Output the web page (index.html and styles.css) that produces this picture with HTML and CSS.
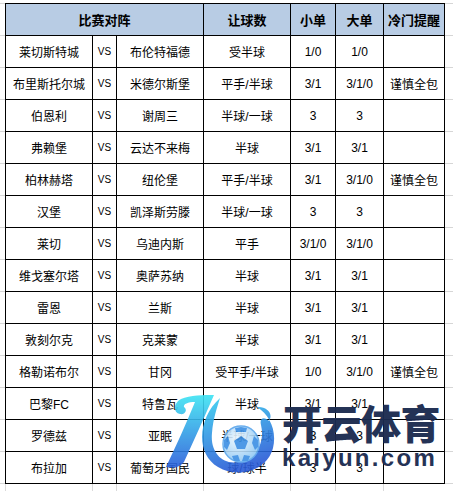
FILE: index.html
```html
<!DOCTYPE html>
<html lang="zh">
<head>
<meta charset="utf-8">
<title>比赛对阵</title>
<link rel="stylesheet" href="styles.css">
</head>
<body>
<div class="page">
  <table class="grid">
    <colgroup>
      <col class="c-home"><col class="c-vs"><col class="c-away"><col class="c-hcp"><col class="c-small"><col class="c-big"><col class="c-tip">
    </colgroup>
    <thead>
      <tr><th colspan="3">比赛对阵</th><th>让球数</th><th>小单</th><th>大单</th><th>冷门提醒</th></tr>
    </thead>
    <tbody>
      <tr><td>莱切斯特城</td><td class="vs">VS</td><td>布伦特福德</td><td>受半球</td><td>1/0</td><td>1/0</td><td></td></tr>
      <tr><td>布里斯托尔城</td><td class="vs">VS</td><td>米德尔斯堡</td><td>平手/半球</td><td>3/1</td><td>3/1/0</td><td>谨慎全包</td></tr>
      <tr><td>伯恩利</td><td class="vs">VS</td><td>谢周三</td><td>半球/一球</td><td>3</td><td>3</td><td></td></tr>
      <tr><td>弗赖堡</td><td class="vs">VS</td><td>云达不来梅</td><td>半球</td><td>3/1</td><td>3/1</td><td></td></tr>
      <tr><td>柏林赫塔</td><td class="vs">VS</td><td>纽伦堡</td><td>平手/半球</td><td>3/1</td><td>3/1/0</td><td>谨慎全包</td></tr>
      <tr><td>汉堡</td><td class="vs">VS</td><td>凯泽斯劳滕</td><td>半球/一球</td><td>3</td><td>3</td><td></td></tr>
      <tr><td>莱切</td><td class="vs">VS</td><td>乌迪内斯</td><td>平手</td><td>3/1/0</td><td>3/1/0</td><td></td></tr>
      <tr><td>维戈塞尔塔</td><td class="vs">VS</td><td>奥萨苏纳</td><td>半球</td><td>3/1</td><td>3/1</td><td></td></tr>
      <tr><td>雷恩</td><td class="vs">VS</td><td>兰斯</td><td>半球</td><td>3/1</td><td>3/1</td><td></td></tr>
      <tr><td>敦刻尔克</td><td class="vs">VS</td><td>克莱蒙</td><td>半球</td><td>3/1</td><td>3/1</td><td></td></tr>
      <tr><td>格勒诺布尔</td><td class="vs">VS</td><td>甘冈</td><td>受平手/半球</td><td>1/0</td><td>3/1/0</td><td>谨慎全包</td></tr>
      <tr><td>巴黎FC</td><td class="vs">VS</td><td>特鲁瓦</td><td>半球</td><td>3/1</td><td>3/1</td><td></td></tr>
      <tr><td>罗德兹</td><td class="vs">VS</td><td>亚眠</td><td>半球/一球</td><td>3</td><td>3</td><td></td></tr>
      <tr><td>布拉加</td><td class="vs">VS</td><td>葡萄牙国民</td><td>球/球半</td><td>3</td><td>3</td><td></td></tr>
    </tbody>
  </table>
  <div class="foot">
    <span class="t-home"></span><span class="t-vs"></span><span class="t-away"></span><span class="t-hcp"></span><span class="t-small"></span><span class="t-big"></span><span class="t-tip"></span>
  </div>

  <div class="logo">
    <svg class="logo-icon" width="120" height="90" viewBox="160 390 120 90" aria-hidden="true">
      <defs>
        <linearGradient id="gk" x1="0" y1="0" x2="0" y2="1">
          <stop offset="0" stop-color="#3ee4f3"/>
          <stop offset="1" stop-color="#2a5fdb"/>
        </linearGradient>
        <linearGradient id="gc" x1="0" y1="0" x2="0.3" y2="1">
          <stop offset="0" stop-color="#38d2f1"/>
          <stop offset="1" stop-color="#2a5cd7"/>
        </linearGradient>
        <radialGradient id="gb" cx="0.4" cy="0.35" r="0.7">
          <stop offset="0" stop-color="#eef8ff"/>
          <stop offset="1" stop-color="#8cc6f3"/>
        </radialGradient>
      </defs>
      <path fill="url(#gk)" d="M214 395 C204 395 190 395 181 399 C173 403 173 413 180 414 C185 415 188 410 184 407 C183 404 188 402 195 402 C186 424 176 446 166 467 C174 469 180 467 184 462 C194 440 204 418 214 395 Z"/>
      <path fill="url(#gc)" d="M220 398 C198 418 195 453 218 467 C238 479 267 471 273 448 C277 431 270 415 257 407 C266 406 274 413 269 421 C265 417 259 417 261 425 C265 442 257 459 238 462 C222 465 210 452 212 433 C213 419 217 408 220 398 Z"/>
      <circle cx="241" cy="444" r="18" fill="url(#gb)" stroke="#5aa6ec" stroke-width="1.5"/>
      <path fill="#3b8fe4" d="M241 436 L248 441 L245 449 L237 449 L234 441 Z"/>
      <path fill="#3b8fe4" d="M241 427 L247 428 L246 432 L236 432 L235 428 Z"/>
      <path fill="#3b8fe4" d="M224 440 L228 436 L230 443 L227 450 L224 447 Z"/>
      <path fill="#3b8fe4" d="M258 440 L254 436 L252 443 L255 450 L258 447 Z"/>
      <path fill="#3b8fe4" d="M232 456 L238 455 L240 461 L234 461 Z"/>
      <path fill="#3b8fe4" d="M250 456 L244 455 L242 461 L248 461 Z"/>
    </svg>
    <div class="brand">
      <div class="brand-cn">开云体育</div>
      <div class="brand-en">kaiyun.com</div>
    </div>
  </div>
</div>
</body>
</html>
```

FILE: styles.css
```css
html, body {
  margin: 0;
  padding: 0;
  background: #fff;
}

.page {
  position: relative;
  width: 453px;
  height: 495px;
  padding: 3px 0 0 5px;
  box-sizing: border-box;
  background-image:
    repeating-linear-gradient(to bottom, #d6d6d6 0 1px, transparent 1px 32px);
  background-position: 0 3px;
  background-size: 100% 481px;
  background-repeat: no-repeat;
  font-family: "Liberation Sans", "Noto Sans CJK SC", sans-serif;
  color: #000;
}

.grid {
  border-collapse: collapse;
  table-layout: fixed;
  width: 440px;
  background: #fff;
  font-size: 12px;
}

.c-home { width: 87px; }
.c-vs { width: 24px; }
.c-away { width: 87px; }
.c-hcp { width: 87px; }
.c-small { width: 45px; }
.c-big { width: 48px; }
.c-tip { width: 61px; }

.grid th,
.grid td {
  border: 1px solid #000;
  padding: 0;
  height: 31px;
  text-align: center;
  vertical-align: middle;
  white-space: nowrap;
  overflow: hidden;
}

.grid th {
  background: #b8cce4;
  font-size: 13px;
  font-weight: bold;
}

.grid td.vs {
  font-size: 10px;
}

.foot {
  display: flex;
  height: 7px;
}

.foot span {
  border-left: 1px solid #dadada;
  box-sizing: border-box;
  flex: none;
}

.t-home { width: 87px; }
.t-vs { width: 24px; }
.t-away { width: 87px; }
.t-hcp { width: 87px; }
.t-small { width: 45px; }
.t-big { width: 48px; }
.t-tip { width: 61px; }

.logo {
  position: absolute;
  left: 160px;
  top: 390px;
  display: flex;
  align-items: flex-start;
}

.logo-icon {
  display: block;
  opacity: 0.9;
}

.brand {
  display: flex;
  flex-direction: column;
  margin-left: 2px;
  color: #1c2b50;
  opacity: 0.96;
}

.brand-cn {
  font-family: "Noto Sans CJK SC", sans-serif;
  font-weight: 900;
  font-size: 40px;
  line-height: 46px;
  letter-spacing: -0.5px;
  margin-top: 9px;
}

.brand-en {
  font-family: "Liberation Sans", sans-serif;
  font-weight: bold;
  font-size: 24px;
  line-height: 24px;
  letter-spacing: 2.3px;
  margin-top: 1px;
}
```
